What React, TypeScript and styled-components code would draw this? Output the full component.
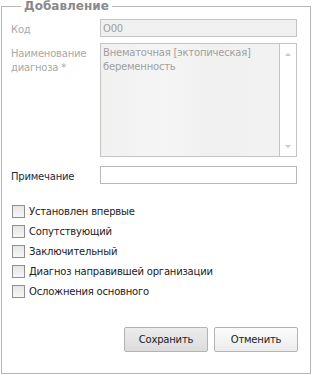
import styled, { createGlobalStyle } from "styled-components";

const GlobalStyle = createGlobalStyle`
  html, body {
    margin: 0;
    padding: 0;
    background: #ffffff;
  }
  body {
    font-family: "DejaVu Sans", Tahoma, sans-serif;
    font-size: 10px;
    letter-spacing: -0.2px;
  }
`;

const flags = [
  "Установлен впервые",
  "Сопутствующий",
  "Заключительный",
  "Диагноз направившей организации",
  "Осложнения основного",
];

const App = () => {
  return (
    <>
      <GlobalStyle />
      <Page>
        <Frame>
          <Legend>Добавление</Legend>
          <FormGrid>
            <Label $disabled>Код</Label>
            <TextField $disabled>O00</TextField>

            <Label $disabled>
              Наименование
              <br />
              диагноза *
            </Label>
            <AreaField>
              <AreaText>
                Внематочная [эктопическая]
                <br />
                беременность
              </AreaText>
              <ScrollTrack>
                <Arrow $dir="up" />
                <Arrow $dir="down" />
              </ScrollTrack>
            </AreaField>

            <Label $note>Примечание</Label>
            <TextField />
          </FormGrid>

          <CheckList>
            {flags.map((f) => (
              <CheckRow key={f}>
                <CheckBox />
                <CheckText>{f}</CheckText>
              </CheckRow>
            ))}
          </CheckList>

          <Buttons>
            <Button $pressed>Сохранить</Button>
            <Button>Отменить</Button>
          </Buttons>
        </Frame>
      </Page>
    </>
  );
};

const Page = styled.div`
  width: 312px;
  height: 375px;
  padding: 0 1px 0 1px;
  box-sizing: border-box;
`;

const Frame = styled.fieldset`
  margin: 0;
  width: 310px;
  height: 374px;
  box-sizing: border-box;
  border: 1px solid #b5b5b5;
  padding: 6px 12px 0 9px;
  display: flex;
  flex-direction: column;
`;

const Legend = styled.legend`
  padding: 0 3px;
  margin-left: 10px;
  font-family: "DejaVu Sans", Tahoma, sans-serif;
  font-size: 12px;
  font-weight: 700;
  letter-spacing: 0;
  line-height: 13px;
  color: #8a8a8a;
`;

const FormGrid = styled.div`
  display: grid;
  grid-template-columns: 89px 197px;
  row-gap: 6px;
  align-items: start;
`;

const Label = styled.div<{ $disabled?: boolean; $note?: boolean }>`
  padding-top: 4px;
  line-height: 14px;
  color: ${({ $disabled }) => ($disabled ? "#a8a8a8" : "#1c2a44")};
  margin-top: ${({ $note }) => ($note ? "1px" : "0")};
`;

const TextField = styled.div<{ $disabled?: boolean }>`
  height: 18px;
  box-sizing: border-box;
  border: 1px solid ${({ $disabled }) => ($disabled ? "#c4c4c4" : "#b8b8b8")};
  background: ${({ $disabled }) => ($disabled ? "#f1f1f1" : "#ffffff")};
  color: #a0a0a0;
  padding: 2px 2px 0;
  line-height: 14px;
  margin-top: ${({ $disabled }) => ($disabled ? "0" : "1px")};
`;

const AreaField = styled.div`
  height: 114px;
  box-sizing: border-box;
  border: 1px solid #c4c4c4;
  display: flex;
  margin-bottom: 2px;
`;

const AreaText = styled.div`
  flex: 1;
  padding: 2px 2px;
  line-height: 14px;
  color: #a0a0a0;
  background: linear-gradient(
    90deg,
    #f1f1f0 0%,
    #f3f3f3 20%,
    #f5f5f5 35%,
    #f1f1f1 60%,
    #f2f2f2 100%
  );
  border-right: 1px solid #c4c4c4;
`;

const ScrollTrack = styled.div`
  width: 16px;
  background: #ffffff;
  display: flex;
  flex-direction: column;
  justify-content: space-between;
  align-items: center;
  padding: 9px 0 8px;
`;

const Arrow = styled.div<{ $dir: "up" | "down" }>`
  width: 0;
  height: 0;
  border-left: 3px solid transparent;
  border-right: 3px solid transparent;
  ${({ $dir }) =>
    $dir === "up"
      ? "border-bottom: 3px solid #c8c8c8;"
      : "border-top: 3px solid #c8c8c8;"}
`;

const CheckList = styled.div`
  display: flex;
  flex-direction: column;
  gap: 7px;
  margin-top: 21px;
  padding-left: 1px;
`;

const CheckRow = styled.div`
  display: flex;
  align-items: center;
  gap: 4px;
  height: 13px;
`;

const CheckBox = styled.span`
  width: 13px;
  height: 13px;
  box-sizing: border-box;
  border: 1px solid #8f8f8f;
  background: linear-gradient(180deg, #e6e6e6 0%, #f6f6f6 100%);
`;

const CheckText = styled.span`
  color: #222222;
  line-height: 13px;
`;

const Buttons = styled.div`
  display: flex;
  justify-content: flex-end;
  gap: 6px;
  margin-top: 29px;
`;

const Button = styled.button<{ $pressed?: boolean }>`
  width: 84px;
  height: 25px;
  border: 1px solid #b3b3b3;
  border-radius: 2px;
  font-family: "DejaVu Sans", Tahoma, sans-serif;
  font-size: 10px;
  letter-spacing: -0.2px;
  color: #222222;
  padding: 0;
  background: ${({ $pressed }) =>
    $pressed
      ? "linear-gradient(180deg, #ececec 0%, #dcdcdc 100%)"
      : "linear-gradient(180deg, #fbfbfb 0%, #ececec 100%)"};
`;

export default App;
